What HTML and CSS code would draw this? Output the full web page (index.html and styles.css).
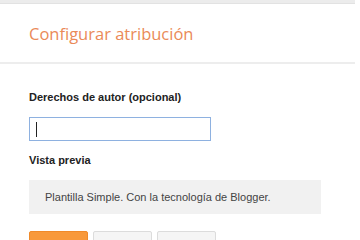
FILE: index.html
```html
<!DOCTYPE html>
<html lang="es">

<head>
  <meta charset="UTF-8">
  <meta name="viewport" content="width=device-width, initial-scale=1.0">
  <title>Configurar atribución</title>
  <link rel="stylesheet" href="styles.css">
</head>

<body>
  <div class="top-strip"></div>
  <div class="dialog">
    <div class="dialog-header">
      <h2 class="dialog-title">Configurar atribución</h2>
    </div>
    <div class="dialog-body">
      <label class="field-label" for="copyright">Derechos de autor (opcional)</label>
      <div class="field-input">
        <span class="caret"></span>
      </div>
      <div class="field-label preview-label">Vista previa</div>
      <div class="preview-box">Plantilla Simple. Con la tecnología de Blogger.</div>
      <div class="button-row">
        <button class="btn btn-primary">Guardar</button>
        <button class="btn">Cancelar</button>
        <button class="btn">Eliminar</button>
      </div>
    </div>
  </div>
</body>

</html>
```

FILE: styles.css
```css
body {
  margin: 0;
  background: #fff;
  font-family: Arial, 'Liberation Sans', sans-serif;
  overflow: hidden;
}

.top-strip {
  height: 3px;
  width: 355px;
  background: #ececec;
  border-bottom: 1px solid #e2e2e2;
}

.dialog {
  width: 355px;
}

.dialog-header {
  height: 58px;
  padding-left: 29px;
  display: flex;
  align-items: center;
  border-bottom: 2px solid #ededed;
}

.dialog-title {
  margin: 0;
  font-family: 'Open Sans', sans-serif;
  font-weight: normal;
  font-size: 16.5px;
  color: #ea8a58;
}

.dialog-body {
  padding: 26px 29px 0;
}

.field-label {
  display: block;
  font-family: 'Liberation Sans', Arial, sans-serif;
  font-weight: bold;
  font-size: 11px;
  color: #222;
  line-height: 14px;
}

.field-input {
  margin-top: 13px;
  width: 174px;
  height: 22px;
  border: 1px solid #8eb1e0;
  display: flex;
  align-items: center;
  padding-left: 6px;
  box-sizing: content-box;
}

.caret {
  width: 1px;
  height: 15px;
  background: #222;
}

.preview-label {
  margin-top: 12px;
}

.preview-box {
  margin-top: 13px;
  width: 276px;
  height: 34px;
  padding-left: 16px;
  background: #f1f1f1;
  display: flex;
  align-items: center;
  font-family: 'Liberation Sans', Arial, sans-serif;
  font-size: 11px;
  color: #444;
}

.button-row {
  margin-top: 17px;
  display: flex;
  gap: 5px;
}

.btn {
  width: 59px;
  height: 28px;
  border: 1px solid #dcdcdc;
  border-radius: 2px;
  background: #f5f5f5;
  font-family: 'Liberation Sans', Arial, sans-serif;
  font-size: 11px;
  font-weight: bold;
  color: #444;
  padding: 0;
}

.btn-primary {
  background: #f8993b;
  border-color: #f08a2a;
  color: #fff;
}
```
